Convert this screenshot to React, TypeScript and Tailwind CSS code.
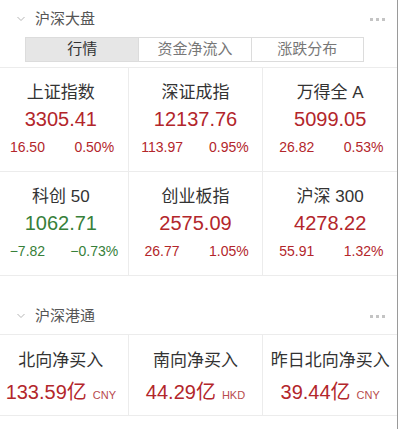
const FONT = "font-['Liberation_Sans','Noto_Sans_CJK_SC',sans-serif]";

type Quote = {
  name: string;
  value: string;
  change: string;
  pct: string;
  up: boolean;
};

const QUOTES: Quote[] = [
  { name: '上证指数', value: '3305.41', change: '16.50', pct: '0.50%', up: true },
  { name: '深证成指', value: '12137.76', change: '113.97', pct: '0.95%', up: true },
  { name: '万得全 A', value: '5099.05', change: '26.82', pct: '0.53%', up: true },
  { name: '科创 50', value: '1062.71', change: '−7.82', pct: '−0.73%', up: false },
  { name: '创业板指', value: '2575.09', change: '26.77', pct: '1.05%', up: true },
  { name: '沪深 300', value: '4278.22', change: '55.91', pct: '1.32%', up: true },
];

const FLOWS = [
  { name: '北向净买入', value: '133.59亿', unit: 'CNY' },
  { name: '南向净买入', value: '44.29亿', unit: 'HKD' },
  { name: '昨日北向净买入', value: '39.44亿', unit: 'CNY' },
];

function SectionHeader({ title }: { title: string }) {
  return (
    <div className="flex h-[20px] items-center pl-[17px] pr-[12px]">
      <svg width="8" height="6" viewBox="0 0 8 6" className="shrink-0">
        <polyline points="0.5,1 4,4.5 7.5,1" fill="none" stroke="#b5b5b5" strokeWidth="1" />
      </svg>
      <span className="ml-[10px] text-[15px] leading-[20px] text-[#555]">{title}</span>
      <div className="ml-auto flex gap-[3px]">
        <span className="h-[3px] w-[3px] bg-[#c4c4c4]" />
        <span className="h-[3px] w-[3px] bg-[#c4c4c4]" />
        <span className="h-[3px] w-[3px] bg-[#c4c4c4]" />
      </div>
    </div>
  );
}

export default function App() {
  const tabs = ['行情', '资金净流入', '涨跌分布'];
  return (
    <div className={`h-[429px] w-[403px] overflow-hidden bg-white ${FONT}`}>
      <div className="h-full w-[398px] border-r border-[#9a9a9a]">
        <div className="pt-[9px]">
          <SectionHeader title="沪深大盘" />
        </div>
        <div className="ml-[25px] mt-[8px] grid h-[25px] w-[339px] grid-cols-3 border border-[#dcdcdc]">
          {tabs.map((t, i) => (
            <div
              key={t}
              className={
                i === 0
                  ? 'flex items-center justify-center bg-[#e6e6e6] text-[15px] text-[#333]'
                  : 'flex items-center justify-center border-l border-[#dcdcdc] text-[15px] text-[#777]'
              }
            >
              {t}
            </div>
          ))}
        </div>

        <div className="-ml-[6px] mt-[5px] grid w-[403px] grid-cols-3 gap-px border-y border-[#ececec] bg-[#ececec]">
          {QUOTES.map((q) => {
            const color = q.up ? 'text-[#b3262b]' : 'text-[#37803a]';
            return (
              <div key={q.name} className="flex h-[103px] flex-col items-center bg-white">
                <div className="mt-[14px] h-[22px] text-[17px] leading-[22px] text-[#333]">{q.name}</div>
                <div className={`mt-[2px] h-[26px] text-[20px] leading-[26px] ${color}`}>{q.value}</div>
                <div className={`mt-[6px] grid h-[18px] w-full grid-cols-2 text-[14px] leading-[18px] ${color}`}>
                  <span className="text-center">{q.change}</span>
                  <span className="text-center">{q.pct}</span>
                </div>
              </div>
            );
          })}
        </div>

        <div className="pt-[30px] pb-[8px]">
          <SectionHeader title="沪深港通" />
        </div>

        <div className="-ml-[6px] grid w-[403px] grid-cols-3 gap-px border-y border-[#ececec] bg-[#ececec]">
          {FLOWS.map((f) => (
            <div key={f.name} className="flex h-[80px] flex-col items-center bg-white">
              <div className="mt-[15px] h-[22px] whitespace-nowrap text-[17px] leading-[22px] text-[#333]">
                {f.name}
              </div>
              <div className="mt-[7px] flex h-[26px] items-baseline whitespace-nowrap text-[#b3262b]">
                <span className="text-[20px] leading-[26px]">{f.value}</span>
                <span className="ml-[6px] text-[11px] text-[#b84a4d]">{f.unit}</span>
              </div>
            </div>
          ))}
        </div>
      </div>
    </div>
  );
}
